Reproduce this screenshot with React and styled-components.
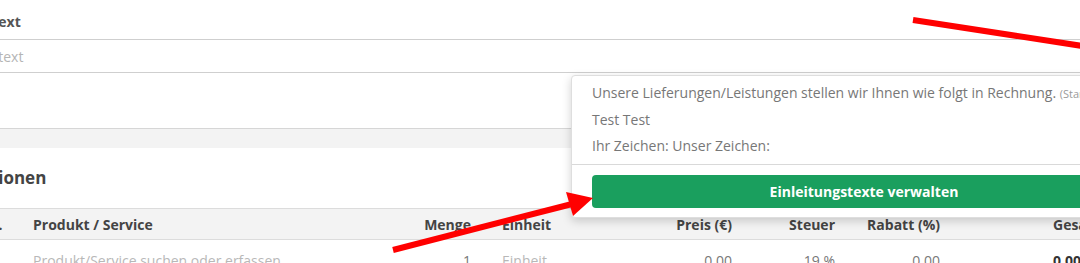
import React from 'react';
import styled, { createGlobalStyle } from 'styled-components';

const GlobalStyle = createGlobalStyle`
  html, body {
    margin: 0;
    padding: 0;
    background: #ffffff;
    overflow: hidden;
  }
  body {
    font-family: "Open Sans", "Noto Sans", Arial, sans-serif;
    font-size: 14px;
    color: #555;
  }
`;

const Viewport = styled.div`
  position: relative;
  width: 1080px;
  height: 263px;
  overflow: hidden;
  background: #f3f3f3;
`;

const Page = styled.div`
  margin-left: -36px;
  width: 1300px;
  display: flex;
  flex-direction: column;
  gap: 19px;
`;

const Card = styled.section`
  background: #ffffff;
  padding: ${p => p.$pad || '0'};
  border-bottom: ${p => (p.$bordered ? '1px solid #d6d6d6' : 'none')};
`;

const FieldLabel = styled.label`
  display: block;
  font-weight: 700;
  font-size: 14px;
  line-height: 20px;
  color: #555;
  margin: 0 0 7px -4px;
`;

const TextInput = styled.input`
  box-sizing: border-box;
  display: block;
  width: 100%;
  height: 34px;
  border: none;
  border-top: 1px solid #cfcfcf;
  border-bottom: 1px solid #cfcfcf;
  padding: 0 4px;
  font-family: inherit;
  font-size: 14px;
  color: #555;
  outline: none;
  &::placeholder {
    color: #b5b5b5;
  }
`;

const SectionTitle = styled.h2`
  margin: 0 0 18px -8px;
  font-size: 17px;
  line-height: 24px;
  font-weight: 700;
  color: #444;
`;

const cols = [
  { w: 69, align: 'left', pad: '0 0 0 10px' },
  { w: 367, align: 'left', pad: '0' },
  { w: 71, align: 'right', pad: '0' },
  { w: 160, align: 'left', pad: '0 0 0 31px' },
  { w: 101, align: 'right', pad: '0' },
  { w: 103, align: 'right', pad: '0' },
  { w: 105, align: 'right', pad: '0' },
  { w: 260, align: 'left', pad: '0 0 0 113px' },
];

const TableRow = styled.div`
  display: grid;
  grid-template-columns: ${cols.map(c => c.w + 'px').join(' ')};
  align-items: center;
  height: ${p => (p.$head ? '30px' : '40px')};
  background: ${p => (p.$head ? '#f3f3f3' : '#ffffff')};
  border-top: ${p => (p.$head ? '1px solid #dcdcdc' : 'none')};
  border-bottom: ${p => (p.$head ? '1px solid #dcdcdc' : 'none')};
`;

const Cell = styled.div`
  text-align: ${p => p.$align};
  padding: ${p => p.$pad};
  white-space: nowrap;
  font-size: 14px;
  font-weight: ${p => (p.$head || p.$strong ? 700 : 400)};
  color: ${p => (p.$head ? '#444' : p.$muted ? '#b8b8b8' : p.$strong ? '#333' : '#777')};
`;

const Dropdown = styled.div`
  position: absolute;
  left: 571px;
  top: 75px;
  width: 586px;
  box-sizing: border-box;
  background: #ffffff;
  border: 1px solid #dedede;
  border-radius: 4px;
  box-shadow: 0 3px 10px rgba(0, 0, 0, 0.18);
  padding: 4px 0 9px 0;
`;

const DropItem = styled.div`
  padding: 0 20px;
  line-height: 26px;
  font-size: 14px;
  color: #777;
  white-space: nowrap;
`;

const Hint = styled.span`
  font-size: 11px;
  color: #9a9a9a;
`;

const Divider = styled.div`
  height: 1px;
  background: #d9d9d9;
  margin: 5px 0 10px 0;
`;

const ManageButton = styled.button`
  display: block;
  box-sizing: border-box;
  margin: 0 20px;
  width: calc(100% - 40px);
  height: 33px;
  border: none;
  border-radius: 4px;
  background: #1a9f5e;
  color: #ffffff;
  font-family: inherit;
  font-size: 14px;
  font-weight: 700;
  cursor: pointer;
`;

const ArrowLayer = styled.svg`
  position: absolute;
  left: 0;
  top: 0;
  width: 1080px;
  height: 263px;
  pointer-events: none;
`;

const headers = ['Pos.', 'Produkt / Service', 'Menge', 'Einheit', 'Preis (€)', 'Steuer', 'Rabatt (%)', 'Gesamt'];
const row = [
  { t: '' },
  { t: 'Produkt/Service suchen oder erfassen', muted: true },
  { t: '1' },
  { t: 'Einheit', muted: true },
  { t: '0.00' },
  { t: '19 %' },
  { t: '0.00' },
  { t: '0.00 €', strong: true },
];

export default function App() {
  return (
    <>
      <GlobalStyle />
      <Viewport>
        <Page>
          <Card $pad="12px 0 55px 0" $bordered>
            <FieldLabel>Kopftext</FieldLabel>
            <TextInput placeholder="Kopftext" />
          </Card>
          <Card $pad="18px 0 0 0">
            <SectionTitle>Positionen</SectionTitle>
            <TableRow $head>
              {headers.map((h, i) => (
                <Cell key={h} $head $align={cols[i].align} $pad={cols[i].pad}>{h}</Cell>
              ))}
            </TableRow>
            <TableRow>
              {row.map((c, i) => (
                <Cell key={i} $align={cols[i].align} $pad={cols[i].pad} $muted={c.muted} $strong={c.strong}>{c.t}</Cell>
              ))}
            </TableRow>
          </Card>
        </Page>

        <Dropdown>
          <DropItem>
            Unsere Lieferungen/Leistungen stellen wir Ihnen wie folgt in Rechnung. <Hint>(Standard)</Hint>
          </DropItem>
          <DropItem>Test Test</DropItem>
          <DropItem>Ihr Zeichen: Unser Zeichen:</DropItem>
          <Divider />
          <ManageButton>Einleitungstexte verwalten</ManageButton>
        </Dropdown>

        <ArrowLayer viewBox="0 0 1080 263">
          <line x1="913" y1="20" x2="1200" y2="64" stroke="#ff0000" strokeWidth="6" />
          <line x1="393" y1="250" x2="576" y2="203" stroke="#ff0000" strokeWidth="6" />
          <polygon points="593,198 566,192 573,216" fill="#ff0000" />
        </ArrowLayer>
      </Viewport>
    </>
  );
}
